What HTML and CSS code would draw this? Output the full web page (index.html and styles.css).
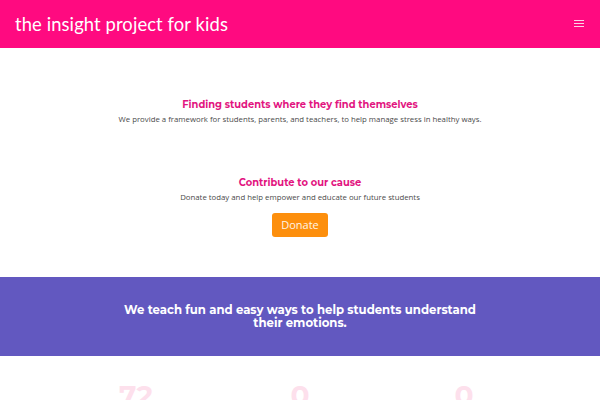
FILE: index.html
```html
<!DOCTYPE html>
<html>
<head>
<meta charset="utf-8">
<link rel="stylesheet" href="styles.css">
</head>
<body>
<header class="top">
  <div class="brand">the insight project for kids</div>
  <button class="menu" aria-label="menu"><span></span><span></span><span></span></button>
</header>
<main>
  <section class="intro">
    <h2 class="title">Finding students where they find themselves</h2>
    <p class="text">We provide a framework for students, parents, and teachers, to help manage stress in healthy ways.</p>
  </section>
  <section class="cause">
    <h2 class="title">Contribute to our cause</h2>
    <p class="text">Donate today and help empower and educate our future students</p>
    <a class="donate" href="#">Donate</a>
  </section>
  <section class="band">
    <p class="band-text">We teach fun and easy ways to help students understand<br>their emotions.</p>
  </section>
  <section class="stats">
    <div class="stat">72</div>
    <div class="stat">0</div>
    <div class="stat">0</div>
  </section>
</main>
</body>
</html>
```
FILE: styles.css
```css
* { box-sizing: border-box; }
html, body { margin: 0; padding: 0; background: #fff; overflow: hidden; }
body { width: 600px; height: 400px; font-family: "Open Sans", sans-serif; }
.top {
  height: 48px;
  background: #ff0a80;
  display: flex;
  align-items: center;
  justify-content: space-between;
  padding: 0 15px 0 15px;
}
.brand {
  color: #fff;
  font-family: Lato, "Noto Sans", sans-serif;
  font-size: 18.4px;
  letter-spacing: 0.1px;
  margin-top: -1px;
}
.menu {
  background: none;
  border: 0;
  padding: 0;
  width: 10px;
  height: 8px;
  display: flex;
  flex-direction: column;
  justify-content: space-between;
  margin-right: 1px;
  margin-top: -1px;
}
.menu span { display: block; height: 1.4px; background: #fbd3e6; }
.intro { padding-top: 49px; text-align: center; }
.title {
  margin: 0;
  color: #e2147f;
  font-family: "Montserrat", "DejaVu Sans", sans-serif;
  font-weight: bold;
  font-size: 9.9px;
  line-height: 14px;
}
.text {
  margin: 2px 0 0;
  color: #4a4a4a;
  font-size: 7.8px;
  line-height: 12px;
}
.cause { padding-top: 50px; text-align: center; }
.cause .text { margin-top: 2px; }
.donate {
  display: inline-block;
  margin-top: 10px;
  width: 56px;
  height: 24px;
  line-height: 24px;
  background: #fd8f0d;
  color: #fff4e6;
  border-radius: 3px;
  text-decoration: none;
  font-size: 11px;
}
.band {
  margin-top: 40px;
  height: 79px;
  background: #6258c0;
  display: flex;
  align-items: center;
  justify-content: center;
}
.band-text {
  margin: 0 0 0 0;
  color: #fff;
  text-align: center;
  font-family: "Montserrat", "DejaVu Sans", sans-serif;
  font-weight: bold;
  font-size: 11.7px;
  line-height: 13px;
}
.stats {
  display: grid;
  grid-template-columns: repeat(3, 164px);
  justify-content: center;
  padding: 22px 0 0 0;
}
.stat {
  text-align: center;
  color: #fde0ec;
  font-family: "Montserrat", "DejaVu Sans", sans-serif;
  font-weight: bold;
  font-size: 28px;
  line-height: 34px;
}
```
